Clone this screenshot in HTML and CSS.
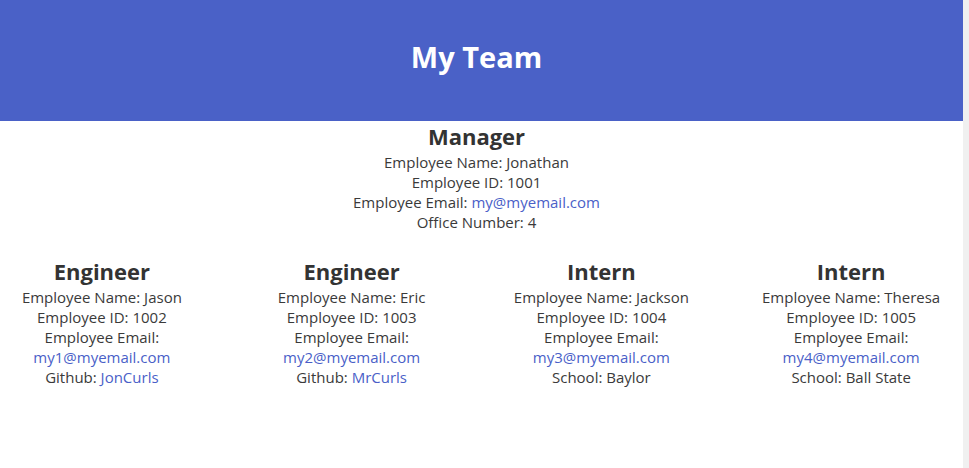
FILE: index.html
```html
<!DOCTYPE html>
<html lang="en">
<head>
<meta charset="utf-8">
<title>My Team</title>
<link rel="stylesheet" href="styles.css">
</head>
<body>
<div class="page">
  <header class="banner">
    <h1 class="banner-title">My Team</h1>
  </header>
  <main class="team">
    <section class="card card-manager">
      <h2 class="card-role">Manager</h2>
      <p class="card-line">Employee Name: Jonathan</p>
      <p class="card-line">Employee ID: 1001</p>
      <p class="card-line">Employee Email: <a href="mailto:my@myemail.com">my@myemail.com</a></p>
      <p class="card-line">Office Number: 4</p>
    </section>
    <div class="row">
      <section class="card">
        <h2 class="card-role">Engineer</h2>
        <p class="card-line">Employee Name: Jason</p>
        <p class="card-line">Employee ID: 1002</p>
        <p class="card-line">Employee Email:<br><a href="mailto:my1@myemail.com">my1@myemail.com</a></p>
        <p class="card-line">Github: <a href="#">JonCurls</a></p>
      </section>
      <section class="card">
        <h2 class="card-role">Engineer</h2>
        <p class="card-line">Employee Name: Eric</p>
        <p class="card-line">Employee ID: 1003</p>
        <p class="card-line">Employee Email:<br><a href="mailto:my2@myemail.com">my2@myemail.com</a></p>
        <p class="card-line">Github: <a href="#">MrCurls</a></p>
      </section>
      <section class="card">
        <h2 class="card-role">Intern</h2>
        <p class="card-line">Employee Name: Jackson</p>
        <p class="card-line">Employee ID: 1004</p>
        <p class="card-line">Employee Email:<br><a href="mailto:my3@myemail.com">my3@myemail.com</a></p>
        <p class="card-line">School: Baylor</p>
      </section>
      <section class="card">
        <h2 class="card-role">Intern</h2>
        <p class="card-line">Employee Name: Theresa</p>
        <p class="card-line">Employee ID: 1005</p>
        <p class="card-line">Employee Email:<br><a href="mailto:my4@myemail.com">my4@myemail.com</a></p>
        <p class="card-line">School: Ball State</p>
      </section>
    </div>
  </main>
</div>
</body>
</html>
```
FILE: styles.css
```css
html {
  background: #f0f0f0;
  height: 100%;
}
body {
  margin: 0;
  width: 963px;
  min-height: 100%;
  background: #ffffff;
  overflow: hidden;
  font-family: "Open Sans", "Noto Sans", sans-serif;
  font-size: 15px;
  line-height: 20px;
  color: #3a3a3a;
}
.page {
  width: 953px;
}
.banner {
  width: 963px;
  height: 121px;
  background: #4a61c7;
  display: flex;
  align-items: center;
  justify-content: center;
  padding-right: 10px;
  box-sizing: border-box;
}
.banner-title {
  margin: 0 0 8px;
  color: #ffffff;
  font-size: 29px;
  font-weight: 700;
  line-height: 40px;
}
.team {
  display: flex;
  flex-direction: column;
  gap: 24px;
}
.card {
  text-align: center;
}
.card-role {
  margin: 0;
  font-size: 22px;
  font-weight: 700;
  line-height: 31px;
  color: #333333;
}
.card-line {
  margin: 0;
}
.card-line a {
  color: #4a5fc8;
  text-decoration: none;
}
.row {
  display: grid;
  grid-template-columns: repeat(4, 1fr);
  margin: 0 -23px;
}
```
